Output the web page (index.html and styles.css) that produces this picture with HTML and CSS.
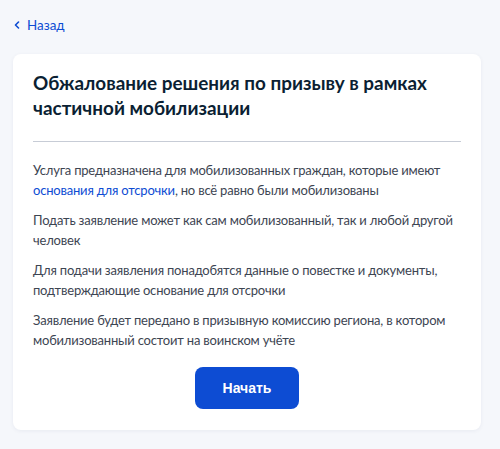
FILE: index.html
```html
<!DOCTYPE html>
<html lang="ru">
<head>
    <meta charset="UTF-8">
    <meta name="viewport" content="width=device-width, initial-scale=1.0">
    <title>Обжалование решения по призыву</title>
    <link rel="stylesheet" href="styles.css">
</head>
<body>
    <div class="page">
        <a href="#" class="back-link">
            <svg class="back-icon" width="8" height="8" viewBox="0 0 8 8">
                <path d="M5.5 1 L2.5 4 L5.5 7" fill="none" stroke="#0d4cd3" stroke-width="1.6" stroke-linecap="round" stroke-linejoin="round"/>
            </svg>
            Назад
        </a>

        <!-- Service card -->
        <div class="card">
            <h1 class="card-title">Обжалование решения по призыву в рамках частичной мобилизации</h1>
            <div class="divider"></div>
            <p>Услуга предназначена для мобилизованных граждан, которые имеют <a href="#">основания для отсрочки</a>, но всё равно были мобилизованы</p>
            <p>Подать заявление может как сам мобилизованный, так и любой другой человек</p>
            <p>Для подачи заявления понадобятся данные о повестке и документы, подтверждающие основание для отсрочки</p>
            <p>Заявление будет передано в призывную комиссию региона, в котором мобилизованный состоит на воинском учёте</p>
            <div class="actions">
                <button type="button" class="start-btn">Начать</button>
            </div>
        </div>
    </div>
</body>
</html>
```

FILE: styles.css
```css
* {
    margin: 0;
    padding: 0;
    box-sizing: border-box;
}
body {
    font-family: Lato, 'Noto Sans', sans-serif;
    background: #f5f7fb;
    color: #0b1f33;
}
.page {
    padding: 13px 19px 20px 13px;
}
.back-link {
    display: inline-flex;
    align-items: center;
    gap: 6px;
    color: #0d4cd3;
    font-size: 13.4px;
    text-decoration: none;
    line-height: 20px;
}
.back-icon {
    margin-top: 1px;
}
.card {
    margin-top: 19px;
    background: #fff;
    border-radius: 8px;
    box-shadow: 0 1px 4px rgba(16, 42, 90, 0.06);
    padding: 16px 20px 21px 20px;
}
.card-title {
    font-size: 18.9px;
    font-weight: 700;
    line-height: 25px;
    color: #0b1f33;
    padding-right: 10px;
}
.divider {
    height: 1px;
    background: #c7ccd6;
    margin: 21px 0 18px;
}
.card p {
    font-size: 13px;
    letter-spacing: -0.2px;
    line-height: 20px;
    color: #3d4552;
    margin-bottom: 10px;
}
.card p a {
    color: #0d4cd3;
    text-decoration: none;
}
.actions {
    display: flex;
    justify-content: center;
    margin-top: 17px;
}
.start-btn {
    width: 104px;
    height: 42px;
    background: #0d4cd3;
    color: #fff;
    border: none;
    border-radius: 8px;
    font-family: 'Liberation Sans', Arial, sans-serif;
    font-size: 14px;
    font-weight: 700;
    cursor: pointer;
}
```
